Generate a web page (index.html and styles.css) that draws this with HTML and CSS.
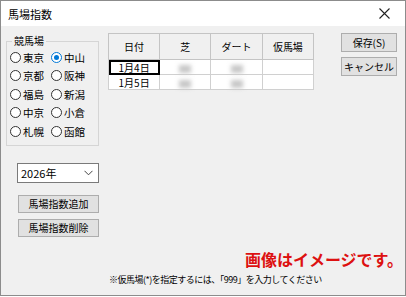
FILE: index.html
```html
<!DOCTYPE html>
<html lang="ja">
<head>
  <meta charset="UTF-8">
  <title>馬場指数</title>
  <link rel="stylesheet" href="styles.css">
</head>
<body>
  <div class="window">
    <div class="titlebar">
      <span class="title">馬場指数</span>
      <svg class="close" width="11" height="11" viewBox="0 0 11 11">
        <path d="M0.5 0.5 L10.5 10.5 M10.5 0.5 L0.5 10.5" stroke="#222" stroke-width="1.1" fill="none"/>
      </svg>
    </div>

    <div class="content">
      <div class="main">
        <!-- left column: course list, year, actions -->
        <div class="left">
          <fieldset class="group">
            <legend>競馬場</legend>
            <div class="radios">
              <label class="opt"><span class="radio"></span>東京</label>
              <label class="opt"><span class="radio on"></span>中山</label>
              <label class="opt"><span class="radio"></span>京都</label>
              <label class="opt"><span class="radio"></span>阪神</label>
              <label class="opt"><span class="radio"></span>福島</label>
              <label class="opt"><span class="radio"></span>新潟</label>
              <label class="opt"><span class="radio"></span>中京</label>
              <label class="opt"><span class="radio"></span>小倉</label>
              <label class="opt"><span class="radio"></span>札幌</label>
              <label class="opt"><span class="radio"></span>函館</label>
            </div>
          </fieldset>

          <div class="select">
            <span>2026年</span>
            <svg width="9" height="6" viewBox="0 0 9 6">
              <path d="M0.5 0.8 L4.5 4.8 L8.5 0.8" stroke="#444" stroke-width="1" fill="none"/>
            </svg>
          </div>
          <button class="btn wide">馬場指数追加</button>
          <button class="btn wide">馬場指数削除</button>
        </div>

        <table class="grid">
          <tr>
            <th>日付</th><th>芝</th><th>ダート</th><th>仮馬場</th>
          </tr>
          <tr>
            <td class="focus">1月4日</td>
            <td><span class="blur"></span></td>
            <td><span class="blur"></span></td>
            <td></td>
          </tr>
          <tr>
            <td>1月5日</td>
            <td><span class="blur"></span></td>
            <td><span class="blur"></span></td>
            <td></td>
          </tr>
        </table>

        <div class="side">
          <button class="btn">保存(S)</button>
          <button class="btn">キャンセル</button>
        </div>
      </div>

      <div class="notice">画像はイメージです。</div>
      <div class="note">※仮馬場(*)を指定するには、「999」を入力してください</div>
    </div>
  </div>
</body>
</html>
```

FILE: styles.css
```css
body {
  margin: 0;
  background-color: #fff;
  font-family: "Noto Sans CJK JP", "Noto Sans", sans-serif;
  font-size: 11px;
  color: #000;
}
.window {
  width: 406px;
  height: 296px;
  box-sizing: border-box;
  border: 1px solid #8c8c8c;
  background-color: #f0f0f0;
  display: flex;
  flex-direction: column;
}
.titlebar {
  height: 25px;
  background-color: #fff;
  display: flex;
  align-items: center;
  justify-content: space-between;
  padding: 0 15px 0 7px;
}
.title {
  font-size: 11px;
}
.content {
  flex: 1;
  padding: 7px 8px 0 5px;
}
.main {
  display: flex;
  align-items: flex-start;
}
.left {
  width: 93px;
  display: flex;
  flex-direction: column;
  padding-top: 2px;
}
.group {
  margin: 0;
  padding: 1px 0 4px 3px;
  border: 1px solid #d5d5d5;
  min-width: 0;
}
.group legend {
  padding: 0 2px;
  margin-left: 2px;
  font-size: 10px;
  line-height: 12px;
}
.radios {
  display: grid;
  grid-template-columns: 41px 41px;
  grid-auto-rows: 18.5px;
}
.opt {
  display: flex;
  align-items: center;
  gap: 2px;
  font-size: 10.5px;
}
.radio {
  width: 11px;
  height: 11px;
  box-sizing: border-box;
  border: 1px solid #333;
  border-radius: 50%;
  background-color: #fff;
  position: relative;
}
.radio.on {
  border-color: #0078d7;
}
.radio.on::after {
  content: "";
  position: absolute;
  left: 2px;
  top: 2px;
  width: 5px;
  height: 5px;
  border-radius: 50%;
  background-color: #0078d7;
}
.select {
  margin: 17px 0 0 11px;
  width: 82px;
  height: 20px;
  box-sizing: border-box;
  border: 1px solid #7a7a7a;
  background-color: #fff;
  display: flex;
  align-items: center;
  justify-content: space-between;
  padding: 0 5px 0 3px;
}
.btn {
  font-family: inherit;
  font-size: 10px;
  background-color: #e1e1e1;
  border: 1px solid #adadad;
  padding: 0;
  height: 18px;
  line-height: 16px;
  color: #000;
  white-space: nowrap;
}
.wide {
  margin: 12px 0 0 12px;
  width: 81px;
}
.wide + .wide {
  margin-top: 6px;
}
.grid {
  margin-left: 9px;
  border-collapse: collapse;
  background-color: #fff;
}
.grid th {
  width: 51px;
  height: 25px;
  padding: 0;
  background-color: #f0f0f0;
  border: 1px solid #c4c4c4;
  font-weight: normal;
  font-size: 10px;
}
.grid td {
  height: 14px;
  padding: 0;
  border: 1px solid #d0d0d0;
  text-align: center;
  font-size: 10px;
  line-height: 13px;
}
.grid td.focus {
  outline: 2px solid #000;
  outline-offset: -2px;
}
.blur {
  display: inline-block;
  width: 12px;
  height: 8px;
  background-color: #c8c8c8;
  filter: blur(2px);
  vertical-align: middle;
}
.side {
  margin-left: 27px;
  display: flex;
  flex-direction: column;
  gap: 5px;
}
.side .btn {
  width: 56px;
  height: 19px;
}
.notice {
  margin: 12px -6px 0 0;
  text-align: right;
  color: #dd1111;
  font-weight: bold;
  font-size: 16px;
  line-height: 21px;
}
.note {
  margin: 4px 0 0 103px;
  font-size: 9px;
  letter-spacing: -0.5px;
  line-height: 12px;
}
```
